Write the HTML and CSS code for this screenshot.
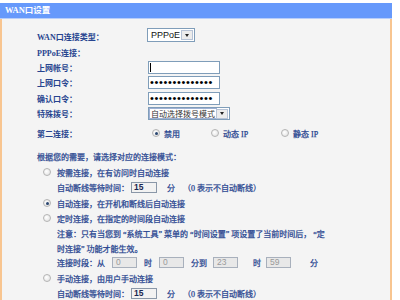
FILE: index.html
```html
<!DOCTYPE html>
<html lang="zh-CN">
<head>
<meta charset="utf-8">
<title>WAN口设置</title>
<link rel="stylesheet" href="styles.css">
</head>
<body>
<div class="panel">
  <div class="hd">WAN口设置</div>
  <div class="bd">
    <div class="row">
      <span class="lbl">WAN口连接类型：</span>
      <span class="sel sel-wan"><span class="sel-text">PPPoE</span><span class="sel-btn"><i class="arrow"></i></span></span>
    </div>
    <div class="row"><span class="lbl">PPPoE连接：</span></div>
    <div class="row"><span class="lbl">上网帐号：</span><span class="inp"><span class="caret"></span></span></div>
    <div class="row"><span class="lbl">上网口令：</span><span class="inp pw">••••••••••••••</span></div>
    <div class="row"><span class="lbl">确认口令：</span><span class="inp pw">••••••••••••••</span></div>
    <div class="row">
      <span class="lbl">特殊拨号：</span>
      <span class="sel sel-dial"><span class="sel-text dial-text">自动选择拨号模式</span><span class="sel-btn"><i class="arrow"></i></span></span>
    </div>
    <div class="row row-second">
      <span class="lbl">第二连接：</span>
      <span class="opt opt1"><span class="radio checked"></span>禁用</span>
      <span class="opt opt2"><span class="radio"></span>动态 IP</span>
      <span class="opt"><span class="radio"></span>静态 IP</span>
    </div>
    <div class="row row-intro">根据您的需要，请选择对应的连接模式：</div>
    <div class="row mode"><span class="radio"></span>按需连接，在有访问时自动连接</div>
    <div class="row sub">自动断线等待时间：<span class="num">15</span><span class="unit">分</span><span class="hint">（0 表示不自动断线）</span></div>
    <div class="row mode"><span class="radio checked"></span>自动连接，在开机和断线后自动连接</div>
    <div class="row mode"><span class="radio"></span>定时连接，在指定的时间段自动连接</div>
    <div class="row sub">注意：只有当您到 “系统工具” 菜单的 “时间设置” 项设置了当前时间后， “定</div>
    <div class="row sub note2">时连接” 功能才能生效。</div>
    <div class="row sub time">连接时段：从<span class="tnum t1">0</span>时<span class="tnum t2">0</span>分到<span class="tnum t3">23</span>时<span class="tnum t4">59</span>分</div>
    <div class="row mode"><span class="radio"></span>手动连接，由用户手动连接</div>
    <div class="row sub">自动断线等待时间：<span class="num">15</span><span class="unit">分</span><span class="hint">（0 表示不自动断线）</span></div>
  </div>
</div>
</body>
</html>
```
FILE: styles.css
```css
* { box-sizing: border-box; }
body {
  margin: 0;
  background: #fff;
  font-family: "Liberation Serif", "Noto Sans CJK SC", serif;
  font-size: 8px;
  color: #27448f;
}
.panel { width: 392px; margin-top: 3px; }
.hd {
  height: 16px;
  line-height: 15px;
  background: #6699fb;
  color: #fff;
  font-weight: bold;
  font-size: 8.5px;
  padding-left: 5px;
  border-bottom: 1px solid #b8cefa;
}
.bd {
  background: #f4f4f4;
  border-left: 2px solid #f8c590;
  border-right: 2px solid #f8c590;
  padding: 10px 0 20px;
  -webkit-text-stroke: 0.25px #27448f;
}
.row {
  display: flex;
  align-items: center;
  height: 15.4px;
  white-space: nowrap;
  padding-left: 35px;
}
.lbl { width: 111px; flex: none; font-weight: bold; -webkit-text-stroke: 0; }

.inp {
  width: 72px;
  height: 13px;
  border: 1px solid #7f9db9;
  background: #fff;
  display: flex;
  align-items: center;
  padding-left: 1px;
}
.caret { width: 1px; height: 9px; background: #000; }
.pw {
  font-family: "Liberation Sans", sans-serif;
  font-size: 11px;
  letter-spacing: 0.65px;
  color: #000;
  -webkit-text-stroke: 0;
  line-height: 11px;
  overflow: hidden;
}

.sel {
  display: flex;
  align-items: center;
  border: 1px solid #7f9db9;
  background: #fff;
  padding: 1px;
  justify-content: space-between;
  -webkit-text-stroke: 0;
}
.sel-wan { width: 48px; height: 14px; margin-left: -1px; margin-top: -3px; }
.sel-dial { width: 82px; height: 13px; }
.sel-text {
  font-family: "Liberation Sans", sans-serif;
  font-size: 9px;
  color: #111;
  padding-left: 2px;
}
.dial-text {
  font-family: "Noto Sans CJK SC", sans-serif;
  font-size: 8px;
  color: #333;
  padding: 0 1px;
  outline: 1px solid #9fb1d4;
  line-height: 9px;
}
.sel-btn {
  width: 12px;
  height: 10px;
  border: 1px solid #b7c3d6;
  background: #ececec;
  display: flex;
  align-items: center;
  justify-content: center;
}
.arrow {
  width: 0; height: 0;
  border-left: 2.5px solid transparent;
  border-right: 2.5px solid transparent;
  border-top: 3px solid #222;
}

.radio {
  width: 8px;
  height: 8px;
  flex: none;
  border-radius: 50%;
  border: 1px solid #b4b4b4;
  background: radial-gradient(circle at 40% 40%, #fff 0, #e4e4e4 80%);
  margin-right: 4px;
  display: inline-flex;
  align-items: center;
  justify-content: center;
}
.radio.checked::after {
  content: "";
  width: 3px;
  height: 3px;
  border-radius: 50%;
  background: #2a4670;
}
.opt { display: flex; align-items: center; }
.opt1 { width: 59px; margin-left: 4px; }
.opt2 { width: 70px; }
.row-second { margin-top: 4px; }
.row-intro { margin-top: 8.5px; }
.mode { padding-left: 41px; }
.mode .radio { margin-right: 6px; }
.sub { padding-left: 55px; }
.note2 { height: 13px; }
.time { height: 16px; }

.num {
  width: 26px;
  height: 11px;
  margin-left: 2px;
  border: 1px solid #8a97a8;
  background: #f2f2f2;
  color: #1a2550;
  -webkit-text-stroke: 0;
  font-family: "Liberation Sans", sans-serif;
  font-weight: bold;
  font-size: 8.5px;
  line-height: 9px;
  padding-left: 2px;
}
.unit { margin-left: 10px; }
.hint { margin-left: 8px; }

.tnum {
  width: 25px;
  height: 11px;
  border: 1px solid #a8b0bc;
  background: #e8e8e8;
  color: #9a9a9a;
  -webkit-text-stroke: 0;
  font-family: "Liberation Sans", sans-serif;
  font-size: 8.5px;
  line-height: 9px;
  padding-left: 3px;
  margin: 0 7px;
}
.t1 { margin-left: 7px; }
.t3 { margin-left: 6px; margin-right: 15px; }
.t4 { margin-left: 5px; margin-right: 19px; }
```
